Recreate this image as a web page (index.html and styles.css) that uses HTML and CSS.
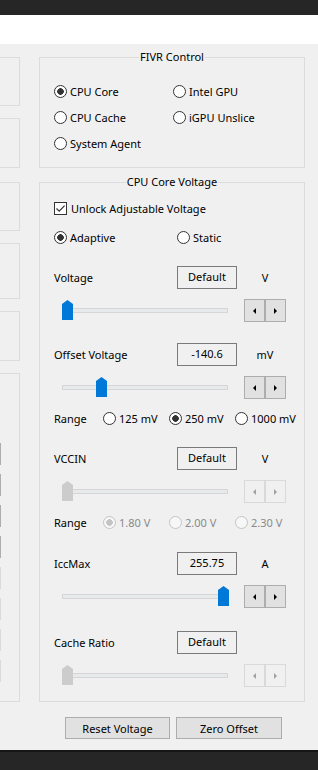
FILE: index.html
```html
<!DOCTYPE html>
<html>
<head>
  <title>Voltage Control</title>
  <link rel="stylesheet" href="styles.css">
</head>
<body>
  <div class="titlebar"></div>
  <div class="toolbar"></div>

  <div class="main">
    <div class="side">
      <div class="side-box b1"></div>
      <div class="side-box b2"></div>
      <div class="side-box b3"></div>
      <div class="side-box b4"></div>
      <div class="side-box b5"></div>
      <div class="side-box b6">
        <div class="edge"></div>
        <div class="edge"></div>
        <div class="edge"></div>
        <div class="edge"></div>
        <div class="edge off"></div>
        <div class="edge off"></div>
        <div class="edge off"></div>
        <div class="edge off"></div>
      </div>
    </div>

    <div class="panel">
      <div class="group fivr">
        <div class="group-title">FIVR Control</div>
        <div class="fivr-grid">
          <div class="option"><span class="radio checked"></span>CPU Core</div>
          <div class="option"><span class="radio"></span>Intel GPU</div>
          <div class="option"><span class="radio"></span>CPU Cache</div>
          <div class="option"><span class="radio"></span>iGPU Unslice</div>
          <div class="option"><span class="radio"></span>System Agent</div>
        </div>
      </div>

      <div class="group voltage">
        <div class="group-title">CPU Core Voltage</div>
        <div class="vbody">
          <div class="option check-row">
            <span class="checkbox">
              <svg width="11" height="11" viewBox="0 0 11 11"><path d="M1.5 5.5 L4.2 8.2 L9.6 2.6" fill="none" stroke="#333" stroke-width="1.2"/></svg>
            </span>
            Unlock Adjustable Voltage
          </div>

          <div class="mode-row">
            <div class="option"><span class="radio checked"></span>Adaptive</div>
            <div class="option"><span class="radio"></span>Static</div>
          </div>

          <!-- Voltage -->
          <div class="field-row">
            <div class="field-label">Voltage</div>
            <div class="field-box">Default</div>
            <div class="unit">V</div>
          </div>
          <div class="slider-row">
            <div class="slider">
              <div class="track"></div>
              <div class="thumb" style="left: 0px"></div>
            </div>
            <div class="spin">
              <span class="spin-btn"><i class="arrow-left"></i></span>
              <span class="spin-btn"><i class="arrow-right"></i></span>
            </div>
          </div>

          <!-- Offset -->
          <div class="field-row">
            <div class="field-label">Offset Voltage</div>
            <div class="field-box">-140.6</div>
            <div class="unit">mV</div>
          </div>
          <div class="slider-row">
            <div class="slider">
              <div class="track"></div>
              <div class="thumb" style="left: 34px"></div>
            </div>
            <div class="spin">
              <span class="spin-btn"><i class="arrow-left"></i></span>
              <span class="spin-btn"><i class="arrow-right"></i></span>
            </div>
          </div>
          <div class="range-row">
            <div class="range-label">Range</div>
            <div class="option range-opt"><span class="radio"></span>125 mV</div>
            <div class="option range-opt"><span class="radio checked"></span>250 mV</div>
            <div class="option range-opt"><span class="radio"></span>1000 mV</div>
          </div>

          <!-- VCCIN -->
          <div class="field-row">
            <div class="field-label">VCCIN</div>
            <div class="field-box">Default</div>
            <div class="unit">V</div>
          </div>
          <div class="slider-row disabled">
            <div class="slider">
              <div class="track"></div>
              <div class="thumb" style="left: 0px"></div>
            </div>
            <div class="spin">
              <span class="spin-btn"><i class="arrow-left"></i></span>
              <span class="spin-btn"><i class="arrow-right"></i></span>
            </div>
          </div>
          <div class="range-row disabled">
            <div class="range-label">Range</div>
            <div class="option range-opt"><span class="radio checked"></span>1.80 V</div>
            <div class="option range-opt"><span class="radio"></span>2.00 V</div>
            <div class="option range-opt"><span class="radio"></span>2.30 V</div>
          </div>

          <!-- IccMax -->
          <div class="field-row gap-22">
            <div class="field-label">IccMax</div>
            <div class="field-box">255.75</div>
            <div class="unit">A</div>
          </div>
          <div class="slider-row">
            <div class="slider">
              <div class="track"></div>
              <div class="thumb" style="left: 156px"></div>
            </div>
            <div class="spin">
              <span class="spin-btn"><i class="arrow-left"></i></span>
              <span class="spin-btn"><i class="arrow-right"></i></span>
            </div>
          </div>

          <!-- Cache ratio -->
          <div class="field-row gap-23">
            <div class="field-label">Cache Ratio</div>
            <div class="field-box">Default</div>
            <div class="unit"></div>
          </div>
          <div class="slider-row disabled">
            <div class="slider">
              <div class="track"></div>
              <div class="thumb" style="left: 0px"></div>
            </div>
            <div class="spin">
              <span class="spin-btn"><i class="arrow-left"></i></span>
              <span class="spin-btn"><i class="arrow-right"></i></span>
            </div>
          </div>
        </div>
      </div>

      <div class="actions">
        <button class="btn reset">Reset Voltage</button>
        <button class="btn zero">Zero Offset</button>
      </div>
    </div>
  </div>

  <div class="statusbar"></div>
</body>
</html>
```

FILE: styles.css
```css
* {
  box-sizing: border-box;
  margin: 0;
  padding: 0;
}

body {
  width: 318px;
  height: 770px;
  overflow: hidden;
  background-color: #f0f0f0;
  font-family: "Noto Sans", sans-serif;
  font-size: 11px;
  color: #000;
}

.titlebar {
  height: 15px;
  background-color: #262626;
}

.toolbar {
  height: 29px;
  background-color: #fff;
}

.main {
  display: flex;
  height: 706px;
}

.statusbar {
  height: 20px;
  background-color: #262626;
  border-top: 2px solid #151515;
}

/* cut-off groups on the left edge */
.side {
  width: 20px;
  flex: none;
}

.side-box {
  border: 1px solid #dcdcdc;
  border-left: none;
}

.b1 { margin-top: 13px; height: 49px; }
.b2 { margin-top: 12px; height: 50px; }
.b3 { margin-top: 14px; height: 49px; }
.b4 { margin-top: 12px; height: 56px; }
.b5 { margin-top: 12px; height: 50px; }

.b6 {
  margin-top: 12px;
  height: 329px;
  padding-top: 69px;
  display: flex;
  flex-direction: column;
  gap: 9px;
}

.edge {
  width: 1px;
  height: 22px;
  background-color: #adadad;
}

.edge.off {
  background-color: #dadada;
}

/* main panel */
.panel {
  width: 266px;
  margin-left: 19px;
}

.group {
  border: 1px solid #dcdcdc;
}

.group-title {
  width: fit-content;
  margin: -9px auto 0;
  padding: 0 1px;
  line-height: 16px;
  background-color: #f0f0f0;
}

.fivr {
  margin-top: 13px;
  height: 111px;
}

.fivr-grid {
  display: grid;
  grid-template-columns: 119px auto;
  row-gap: 10px;
  margin: 18px 0 0 14px;
}

.voltage {
  margin-top: 14px;
  height: 520px;
}

.vbody {
  padding-left: 14px;
}

.option {
  display: flex;
  align-items: center;
  gap: 3px;
  height: 16px;
  white-space: nowrap;
}

.radio {
  flex: none;
  width: 13px;
  height: 13px;
  border: 1px solid #333;
  border-radius: 50%;
  background-color: #fff;
}

.radio.checked {
  background: radial-gradient(circle at center, #333 3px, #fff 3.6px);
}

.checkbox {
  flex: none;
  display: flex;
  align-items: center;
  justify-content: center;
  width: 13px;
  height: 13px;
  border: 1px solid #333;
  background-color: #fff;
  margin-right: 1px;
}

.check-row {
  margin-top: 10px;
}

.mode-row {
  display: grid;
  grid-template-columns: 123px auto;
  margin-top: 13px;
}

.field-row {
  display: flex;
  align-items: center;
  height: 23px;
  margin-top: 21px;
}

.field-row.gap-22 { margin-top: 22px; }
.field-row.gap-23 { margin-top: 23px; }

.field-label {
  width: 123px;
}

.field-box {
  width: 60px;
  height: 23px;
  border: 1px solid #7a7a7a;
  text-align: center;
  line-height: 19px;
}

.unit {
  width: 56px;
  text-align: center;
}

.slider-row {
  display: flex;
  height: 23px;
  margin-top: 10px;
  padding-left: 8px;
}

.slider {
  position: relative;
  width: 166px;
}

.track {
  margin-top: 9px;
  height: 5px;
  border: 1px solid #d6d6d6;
  background-color: #e7eaea;
}

.thumb {
  position: absolute;
  top: 1px;
  width: 11px;
  height: 20px;
  background-color: #0078d7;
  clip-path: polygon(50% 0, 100% 4px, 100% 100%, 0 100%, 0 4px);
}

.spin {
  display: flex;
  margin-left: 16px;
}

.spin-btn {
  display: flex;
  align-items: center;
  justify-content: center;
  width: 21px;
  height: 23px;
  border: 1px solid #adadad;
  background-color: #e1e1e1;
}

.arrow-left,
.arrow-right {
  width: 0;
  height: 0;
  border-top: 3px solid transparent;
  border-bottom: 3px solid transparent;
}

.arrow-left {
  border-right: 3px solid #000;
}

.arrow-right {
  border-left: 3px solid #000;
}

.disabled .thumb {
  background-color: #cccccc;
}

.disabled .spin-btn {
  border-color: #d9d9d9;
  background-color: #f0f0f0;
}

.disabled .arrow-left {
  border-right-color: #a0a0a0;
}

.disabled .arrow-right {
  border-left-color: #a0a0a0;
}

.range-row {
  display: flex;
  align-items: center;
  height: 16px;
  margin-top: 11px;
}

.range-label {
  width: 49px;
}

.range-opt {
  width: 66px;
}

.range-row.disabled .range-opt {
  color: #8a8a8a;
}

.range-row.disabled .radio {
  border-color: #c4c4c4;
  background-color: #f7f7f7;
}

.range-row.disabled .radio.checked {
  background: radial-gradient(circle at center, #c4c4c4 3px, #f7f7f7 3.6px);
}

.actions {
  display: flex;
  gap: 6px;
  margin-top: 15px;
  padding-left: 26px;
}

.btn {
  height: 22px;
  border: 1px solid #adadad;
  background-color: #e1e1e1;
  font-family: inherit;
  font-size: 11px;
  color: #000;
}

.btn.reset { width: 105px; }
.btn.zero { width: 106px; }
```
